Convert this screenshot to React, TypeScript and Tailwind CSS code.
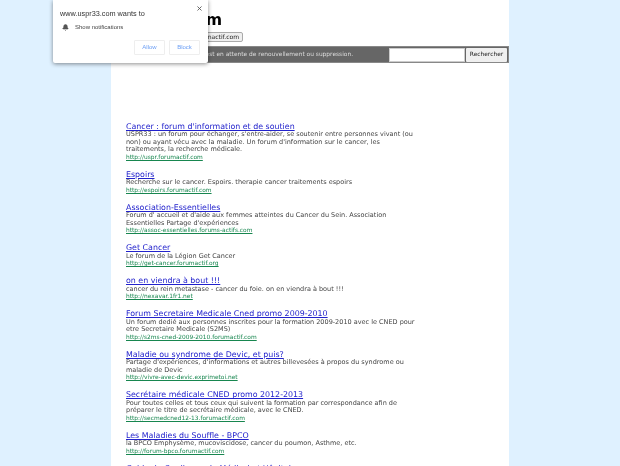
import React from 'react';
import { Bell, X } from 'lucide-react';

const results = [
  {
    title: "Cancer : forum d'information et de soutien",
    desc: "USPR33 : un forum pour échanger, s'entre-aider, se soutenir entre personnes vivant (ou non) ou ayant vécu avec la maladie. Un forum d'information sur le cancer, les traitements, la recherche médicale.",
    url: 'http://uspr.forumactif.com',
  },
  {
    title: 'Espoirs',
    desc: 'Recherche sur le cancer. Espoirs. therapie cancer traitements espoirs',
    url: 'http://espoirs.forumactif.com',
  },
  {
    title: 'Association-Essentielles',
    desc: "Forum d' accueil et d'aide aux femmes atteintes du Cancer du Sein. Association Essentielles Partage d'expériences",
    url: 'http://assoc-essentielles.forums-actifs.com',
  },
  {
    title: 'Get Cancer',
    desc: 'Le forum de la Légion Get Cancer',
    url: 'http://get-cancer.forumactif.org',
  },
  {
    title: 'on en viendra à bout !!!',
    desc: 'cancer du rein metastase - cancer du foie. on en viendra à bout !!!',
    url: 'http://nexavar.1fr1.net',
  },
  {
    title: 'Forum Secretaire Medicale Cned promo 2009-2010',
    desc: 'Un forum dedié aux personnes inscrites pour la formation 2009-2010 avec le CNED pour etre Secretaire Medicale (S2MS)',
    url: 'http://s2ms-cned-2009-2010.forumactif.com',
  },
  {
    title: 'Maladie ou syndrome de Devic, et puis?',
    desc: "Partage d'expériences, d'informations et autres billevesées à propos du syndrome ou maladie de Devic",
    url: 'http://vivre-avec-devic.exprimetoi.net',
  },
  {
    title: 'Secrétaire médicale CNED promo 2012-2013',
    desc: 'Pour toutes celles et tous ceux qui suivent la formation par correspondance afin de préparer le titre de secrétaire médicale, avec le CNED.',
    url: 'http://secmedcned12-13.forumactif.com',
  },
  {
    title: 'Les Maladies du Souffle - BPCO',
    desc: 'la BPCO Emphysème, mucoviscidose, cancer du poumon, Asthme, etc.',
    url: 'http://forum-bpco.forumactif.com',
  },
  {
    title: 'Guide du Cardiaque du Médical et Hôpital',
    desc: '',
    url: '',
  },
];

const App = () => {
  return (
    <div className="relative h-[466px] overflow-hidden bg-[#dff1ff] font-['DejaVu_Sans',sans-serif] blur-[0.4px]">
      <div className="ml-[111px] h-full w-[398px] bg-white">
        <div className="h-[46px] pl-[15px]">
          <h1 className="flex w-[96px] justify-end whitespace-nowrap pt-[11px] text-[15.7px] font-bold leading-[18px] text-black">
            uspr33.com
          </h1>
          <div className="flex w-[117px] justify-end pt-[3px]">
            <div className="whitespace-nowrap rounded-[2px] border border-[#aaa] bg-[#efefef] px-[3px] text-[6px] leading-[8px] text-[#222]">
              http://uspr.forumactif.com
            </div>
          </div>
        </div>

        <div className="flex h-[17px] items-center justify-between border border-[#888] bg-[#666] pr-[1px]">
          <div className="flex w-[241px] justify-end whitespace-nowrap text-[5.9px] text-[#ddd]">
            Ce forum est en attente de renouvellement ou suppression.
          </div>
          <div className="flex items-center gap-[1px]">
            <input className="h-[14px] w-[76px] border border-[#ccc] bg-white" />
            <button className="h-[14px] w-[41px] rounded-[1px] bg-[#efefef] text-[5.9px] text-[#222]">Rechercher</button>
          </div>
        </div>

        <div className="flex w-[305px] flex-col gap-[8.3px] pl-[15px] pt-[58.5px]">
          {results.map((r) => (
            <div key={r.title}>
              <a href="#" className="block whitespace-nowrap text-[7.9px] leading-[9.5px] text-[#2222cc] underline">
                {r.title}
              </a>
              <p className="text-[6.5px] leading-[7.6px] text-[#444]">{r.desc}</p>
              <a href="#" className="block text-[5.9px] leading-[7.6px] text-[#17864f] underline">
                {r.url}
              </a>
            </div>
          ))}
        </div>
      </div>

      {/* notification prompt */}
      <div className="absolute left-[53px] top-0 h-[63px] w-[155px] rounded-b-[2px] bg-white font-['Liberation_Sans',sans-serif] shadow-[0_1px_4px_rgba(0,0,0,0.45)]">
        <X className="absolute right-[5px] top-[5px] h-[7px] w-[7px] text-[#555]" strokeWidth={3} />
        <div className="pl-[7px] pt-[9px] text-[7.3px] leading-[9px] text-[#333]">www.uspr33.com wants to</div>
        <div className="mt-[6px] flex items-center gap-[6px] pl-[9px]">
          <Bell className="h-[7px] w-[7px] fill-[#555] text-[#555]" />
          <span className="text-[6px] leading-[7px] text-[#444]">Show notifications</span>
        </div>
        <div className="mt-[9px] flex justify-end gap-[4px] pr-[8px]">
          <button className="h-[15px] w-[31px] rounded-[1px] border border-[#eeeeee] text-[6px] text-[#6ea0f5]">Allow</button>
          <button className="h-[15px] w-[31px] rounded-[1px] border border-[#eeeeee] text-[6px] text-[#6ea0f5]">Block</button>
        </div>
      </div>
    </div>
  );
};

export default App;
